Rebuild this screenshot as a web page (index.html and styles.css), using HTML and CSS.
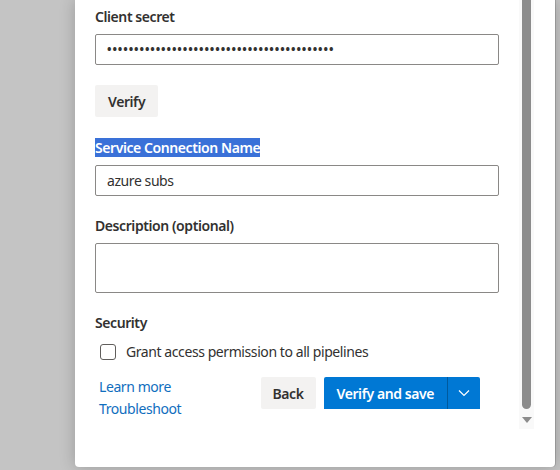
FILE: index.html
```html
<!DOCTYPE html>
<html>
<head>
<meta charset="utf-8">
<link rel="stylesheet" href="styles.css">
</head>
<body>
<div class="panel">
  <div class="content">
    <div class="label first">Client secret</div>
    <div class="input"><span class="dots">••••••••••••••••••••••••••••••••••••••••••</span></div>
    <div class="row-verify"><button class="btn">Verify</button></div>
    <div class="label sel-wrap"><span class="sel">Service Connection Name</span></div>
    <div class="input input-gap">azure subs</div>
    <div class="label spaced">Description (optional)</div>
    <div class="textarea"></div>
    <div class="label spaced">Security</div>
    <div class="check-row"><span class="checkbox"></span><span class="check-text">Grant access permission to all pipelines</span></div>
    <div class="footer">
      <div class="links"><a class="link">Learn more</a><a class="link">Troubleshoot</a></div>
      <div class="actions">
        <button class="btn back">Back</button>
        <div class="split">
          <button class="primary">Verify and save</button>
          <button class="primary chev"><svg width="12" height="8" viewBox="0 0 12 8"><path d="M1 1.5 L6 6.5 L11 1.5" fill="none" stroke="#fff" stroke-width="1.2"/></svg></button>
        </div>
      </div>
    </div>
  </div>
  <div class="scrollbar">
    <div class="thumb"></div>
    <div class="arrow"></div>
  </div>
</div>
</body>
</html>
```
FILE: styles.css
```css
html, body {
  margin: 0;
  padding: 0;
}
body {
  width: 560px;
  height: 470px;
  overflow: hidden;
  background: #c4c4c4;
  font-family: "Noto Sans", "Open Sans", sans-serif;
  font-size: 14px;
  letter-spacing: -0.42px;
  color: #323130;
  display: flex;
}
.panel {
  margin-left: 75px;
  width: 480px;
  height: 467px;
  background: #fff;
  border-radius: 0 0 4px 4px;
  box-shadow: 0 0 16px rgba(0,0,0,0.22), 1px 0 0 #a8a8a8;
  display: flex;
}
.content {
  width: 404px;
  margin-left: 20px;
  display: flex;
  flex-direction: column;
}
.label {
  font-weight: 600;
  line-height: 20px;
  color: #323130;
}
.label.first {
  margin-top: 7px;
}
.input {
  box-sizing: border-box;
  margin-top: 7px;
  height: 31px;
  border: 1px solid #8a8886;
  border-radius: 2px;
  padding: 0 11px;
  display: flex;
  align-items: center;
  line-height: 20px;
}
.dots {
  font-size: 12px;
  font-weight: 700;
  letter-spacing: 0.9px;
  color: #323130;
}
.row-verify {
  margin-top: 20px;
  display: flex;
}
.btn {
  height: 32px;
  padding: 0 13px;
  border: none;
  border-radius: 2px;
  background: #f3f2f1;
  font-family: inherit;
  font-size: 14px;
  font-weight: 600;
  letter-spacing: inherit;
  color: #323130;
}
.btn.back {
  padding: 0 12px;
}
.sel-wrap {
  margin-top: 21px;
  line-height: 19px;
}
.sel {
  background: #3a71d8;
  color: #fff;
}
.input-gap {
  margin-top: 8px;
}
.spaced {
  margin-top: 20px;
}
.textarea {
  box-sizing: border-box;
  margin-top: 7px;
  height: 50px;
  border: 1px solid #8a8886;
  border-radius: 2px;
}
.check-row {
  margin-top: 9px;
  height: 20px;
  display: flex;
  align-items: center;
  padding-left: 5px;
  gap: 10px;
}
.checkbox {
  box-sizing: border-box;
  width: 16px;
  height: 16px;
  border: 1px solid #605e5c;
  border-radius: 3px;
}
.check-text {
  line-height: 20px;
}
.footer {
  margin-top: 14px;
  display: flex;
  justify-content: space-between;
  padding-right: 19px;
}
.links {
  display: flex;
  flex-direction: column;
  padding-left: 4px;
}
.link {
  color: #106ebe;
  line-height: 22px;
}
.actions {
  display: flex;
  gap: 8px;
  margin-top: 1px;
}
.split {
  display: flex;
  border-radius: 2px;
  overflow: hidden;
}
.primary {
  height: 32px;
  border: none;
  background: #0078d4;
  color: #fff;
  font-family: inherit;
  font-size: 14px;
  font-weight: 600;
  letter-spacing: inherit;
  padding: 0 13px;
}
.chev {
  width: 33px;
  padding: 0;
  border-left: 1px solid #005a9e;
  display: flex;
  align-items: center;
  justify-content: center;
}
.scrollbar {
  margin-left: 20px;
  width: 15px;
  height: 429px;
  background: #f9f9f9;
  display: flex;
  flex-direction: column;
  align-items: center;
}
.thumb {
  width: 9px;
  height: 409px;
  background: #8c8c8c;
  border-radius: 0 0 5px 5px;
}
.arrow {
  margin-top: 8px;
  width: 0;
  height: 0;
  border-left: 5px solid transparent;
  border-right: 5px solid transparent;
  border-top: 6px solid #8c8c8c;
}
```
